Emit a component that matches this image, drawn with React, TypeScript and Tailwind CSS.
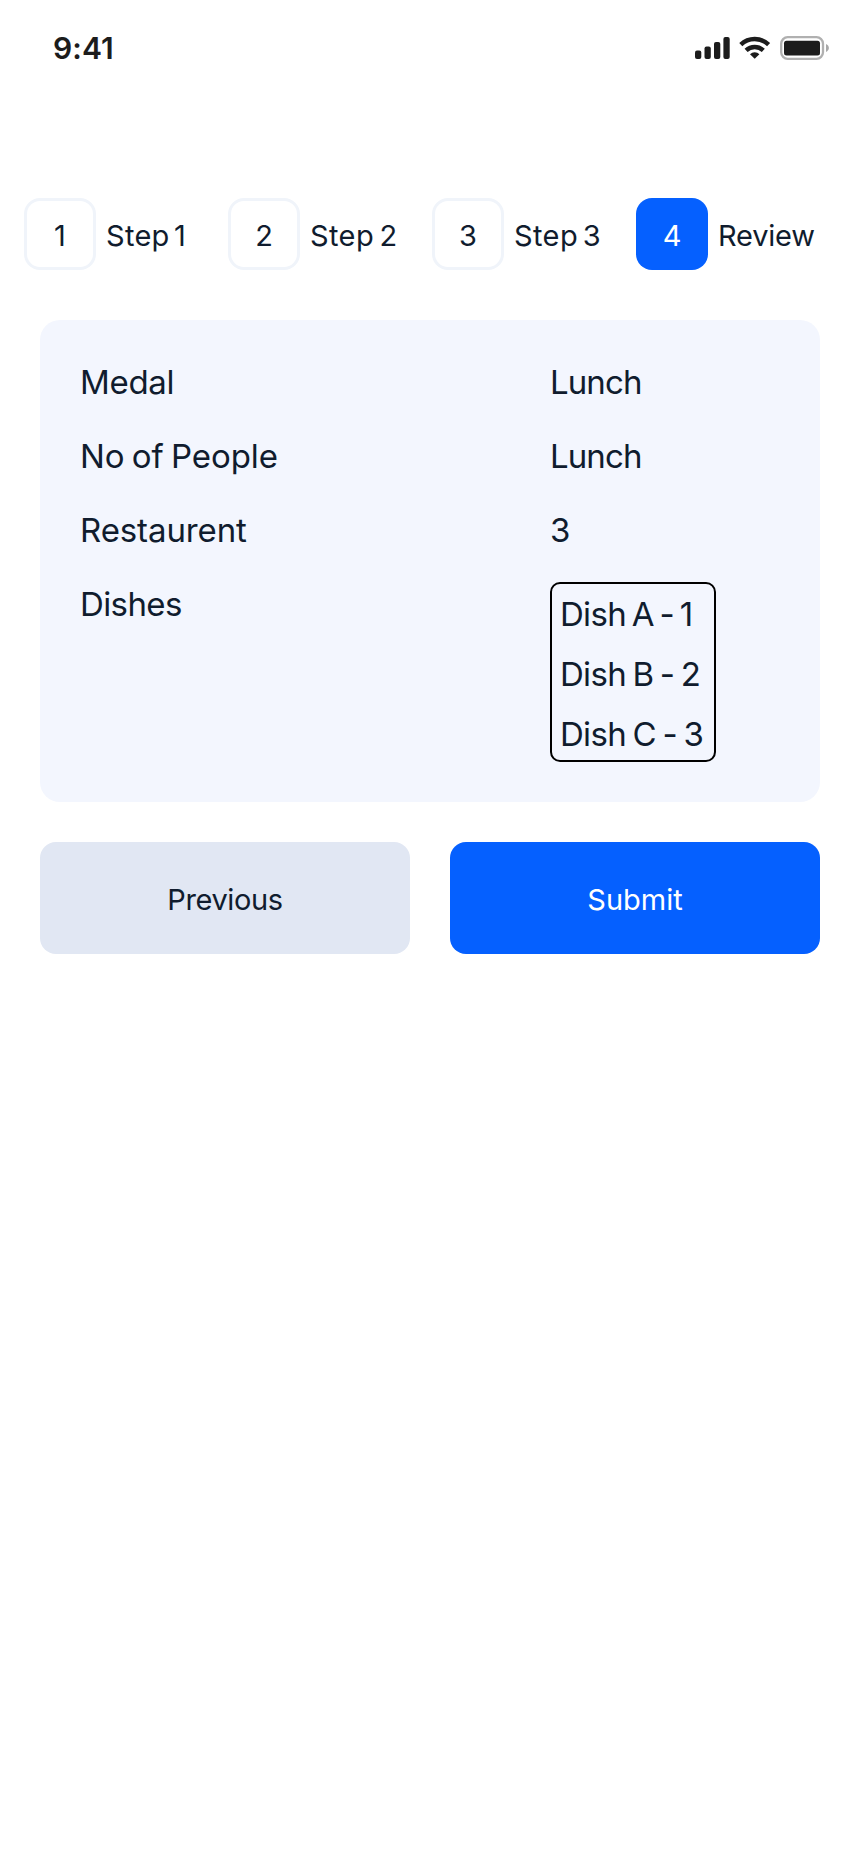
const steps = [
  { n: "1", label: "Step 1", labelClass: "tracking-[0.3px] [word-spacing:-4.2px]", active: false },
  { n: "2", label: "Step 2", labelClass: "tracking-[0.4px] [word-spacing:-3.2px]", active: false },
  { n: "3", label: "Step 3", labelClass: "tracking-[0.4px] [word-spacing:-4px]", active: false },
  { n: "4", label: "Review", labelClass: "tracking-[-0.2px]", active: true },
];

const details = [
  { label: "Medal", value: "Lunch", labelClass: "tracking-[-0.3px]", valueClass: "tracking-[-0.9px]" },
  { label: "No of People", value: "Lunch", labelClass: "tracking-[-0.05px] [word-spacing:-2px]", valueClass: "tracking-[-0.9px]" },
  { label: "Restaurent", value: "3", labelClass: "tracking-[-0.1px]", valueClass: "" },
];

const dishes = [
  { text: "Dish A - 1", cls: "[word-spacing:-2.8px]" },
  { text: "Dish B - 2", cls: "[word-spacing:-2.1px]" },
  { text: "Dish C - 3", cls: "[word-spacing:-2px]" },
];

function StatusBar() {
  return (
    <header className="flex h-[95px] items-center justify-between pl-[53px] pr-[30px] text-[#1c1c1c]">
      <span className="text-[30px] font-semibold leading-[36px] tracking-[0.1px]">9:41</span>
      <svg width="136" height="26" viewBox="694 35 136 26" fill="currentColor" aria-hidden="true">
        <rect x="695" y="50.5" width="6.3" height="8.5" rx="2" />
        <rect x="704.5" y="46.5" width="6.3" height="12.5" rx="2" />
        <rect x="714" y="42" width="6.3" height="17" rx="2" />
        <rect x="723.4" y="37" width="6.3" height="22" rx="2" />
        <g fill="none" stroke="currentColor" strokeWidth="4.4">
          <path d="M740.8 44.6a20 20 0 0 1 27.8 0" />
          <path d="M746.1 50.4a12.4 12.4 0 0 1 17.2 0" />
        </g>
        <path d="M754.7 58.8l-4.700-4.600a6.8 6.8 0 0 1 9.400 0z" />
        <rect x="781.2" y="37.2" width="41.800" height="21.600" rx="6.500" fill="none" stroke="#b0b0b0" strokeWidth="2.300" />
        <rect x="784" y="40.8" width="36" height="14.600" rx="2.500" />
        <path d="M826 44v8c1.700-.7 2.900-2.300 2.900-4s-1.200-3.300-2.900-4z" fill="#a8a8a8" />
      </svg>
    </header>
  );
}

export default function App() {
  return (
    <main className="flex min-h-[1864px] w-[860px] flex-col bg-white font-['Inter',sans-serif] text-[#101c2e]">
      <StatusBar />

      <nav className="mt-[103px] flex pl-6 text-[29px] leading-[36px]">
        {steps.map((s) => (
          <div key={s.n} className="flex w-[204px] shrink-0 items-center gap-[10px]">
            <span
              className={
                s.active
                  ? "flex size-[72px] items-center justify-center rounded-2xl bg-[#0560ff] pt-[3px] text-white"
                  : "flex size-[72px] items-center justify-center rounded-2xl border-[3px] border-[#f0f4fa] pt-[3px]"
              }
            >
              {s.n}
            </span>
            <span className={`whitespace-nowrap pt-[3px] ${s.labelClass}`}>{s.label}</span>
          </div>
        ))}
      </nav>

      <section className="mx-10 mt-[50px] flex flex-col gap-[30px] rounded-[20px] bg-[#f3f6fe] p-10 text-[33px] leading-[44px]">
        {details.map((d) => (
          <div key={d.label} className="flex">
            <span className={`w-[470px] ${d.labelClass}`}>{d.label}</span>
            <span className={d.valueClass}>{d.value}</span>
          </div>
        ))}
        <div className="flex items-start">
          <span className="w-[470px] tracking-[-0.6px]">Dishes</span>
          <ul className="flex h-[180px] w-[166px] flex-col gap-4 whitespace-nowrap rounded-[10px] border-2 border-black pl-2 pt-2 tracking-[-0.7px]">
            {dishes.map((d) => (
              <li key={d.text} className={d.cls}>{d.text}</li>
            ))}
          </ul>
        </div>
      </section>

      <div className="mx-10 mt-10 flex gap-10 text-[29px] leading-[36px]">
        <button className="h-28 flex-1 rounded-2xl bg-[#e1e7f3] pt-[3px] tracking-[-0.4px]">Previous</button>
        <button className="h-28 flex-1 rounded-2xl bg-[#0560ff] pt-[3px] text-white">Submit</button>
      </div>
    </main>
  );
}
